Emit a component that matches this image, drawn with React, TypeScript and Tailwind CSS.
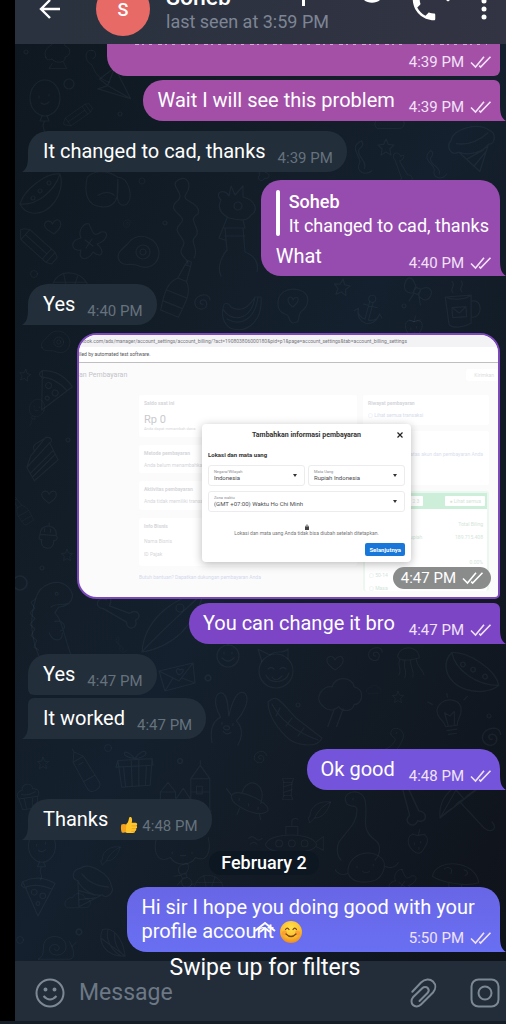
import React from "react";

type DoodleKind = keyof typeof doodles;

const doodles = {
  star: <path d="M0-8 2.4-2.6 8-2 3.8 2 5 8 0 5-5 8-3.8 2-8-2-2.4-2.6Z" />,
  heart: <path d="M0 7C-5 3-9 0-8-4-6-8-1-7 0-3 2-7 7-8 8-4 9 0 5 4 0 7Z" />,
  spiral: <path d="M1 1C-2 2-3-2 0-3 4-4 6 0 4 4 1 8-6 6-7 1-8-5-2-9 4-8 7-7 8-5 8-3" />,
  dot: <circle r="2" />,
  ring: <circle r="5" />,
  balloon: (
    <>
      <ellipse rx="15" ry="18" />
      <path d="M-3 18-5 23H4L2 18M0 23C-6 29 3 32-2 38M-6-2V0M4-4V-2M-4 5Q0 8 4 4" />
    </>
  ),
  plane: <path d="M-17-2-4-16 17 12-17 8-8 3-4-16 M-8 3 17 12M-17-2-8 3" />,
  hat: <path d="M-14 4C-18-4-10-10-6-12-4-20 8-18 10-10 18-8 18 2 10 4 12 12-4 12-6 6-10 8-14 8-14 4ZM-6 12-10 18H12L8 10" />,
  curl: <path d="M-10-22C-20-24-20-8-10-4-6 8 0 14 12 18M-10-22C-4-22-4-12-9-12" />,
  melon: (
    <>
      <path d="M-20 12C-16-2 6-20 20-18 26 0 10 24-8 21-14 20-18 16-20 12ZM-20 12C-4 14 14 0 20-18" />
      <circle cx="0" cy="-1" r="2" />
      <circle cx="9" cy="-9" r="2" />
      <circle cx="-7" cy="6" r="2" />
    </>
  ),
  bag: <path d="M-22-12C-26 6-22 20-6 21 8 22 14 14 12-10M-22-12C-14-20 0-20 12-12 24-12 30 10 22 18 12 22 10 14 12-8M-10 8C-4 4 4 4 8 8" />,
  wiggle: <path d="M-8-42C-18-36 2-28-10-20-20-10 4-6-6 2-16 12 4 16-4 26-8 34 2 36 2 42M-8-42C2-48 6-36 0-28-6-20 16-20 12-8 0-2 16 6 10 14 2 20 14 26 8 36" />,
  bottle: <path d="M-2-28H4L6-12C14-4 14 4 12 26H-8C-12 6-12-4-4-12ZM-4-12H6M-10 4H12M-9 16H12M-2-28-1-33H3L4-28" />,
  giraffe: (
    <>
      <path d="M-14-32C-22-40-10-44-6-36L-4-46 0-37 8-46 8-35C20-32 24-22 16-17 12-10 4-12-6-14-14-18-18-24-14-32ZM-8-14-12-4H10L8-12M-10-4-8 18M8-4 10 20M-10 4H10M-12-4-16 6-10 8M-8 18C-18 30-16 40-14 44M10 20C20 24 24 30 22 40" />
      <circle cx="3" cy="-26" r="4" />
    </>
  ),
  pencil: <path d="M-26-4-20-8 20-8 26-5V5L20 8-20 8-28 0ZM-20-8V8M14-8V8M20-8V8M-20 0H14" />,
  bird: <path d="M0-18C4-10 4-4 12-10 20-12 20-2 8 2 16 8 14 18 4 10 0 18-12 20-8 8-18 10-20-2-8-4-12-12-4-20 0-18ZM-4-2 4 4M3-3-3 6" />,
  egg: (
    <>
      <path d="M-20 8C-24 0-14-4-8-12 2-20 18-14 20 0 20 12 10 18 0 14-8 10-16 16-20 8Z" />
      <circle cx="4" cy="0" r="7" />
      <circle cx="4" cy="0" r="3" />
    </>
  ),
  turtle: <path d="M-20 8C-18-8-8-14 4-12 16-10 22 0 22 8ZM-20 8C-28 8-28 0-20 0M-12 8-14 14M14 8 16 14M-6-12-2 8M10-10 4 8M-16-2H20" />,
  banana: <path d="M-18-2C-10 12 10 10 14-14L20-14C22 8 8 22-8 18-16 16-20 6-18-2ZM-18-2C-18-10-12-8-10-4 0 2 8-4 14-14M-14 8C0 16 14 8 17-14" />,
  friedHeart: (
    <>
      <path d="M-15 2C-16-10-6-16 6-13 18-10 16 2 10 7 2 12 10 20 0 20-6 18-2 12-8 11-12 10-15 6-15 2Z" />
      <path d="M0 4C-6 0-6-5-3-6-1-6 0-4 0-3 2-7 6-6 5-3 5 0 2 2 0 4Z" />
    </>
  ),
  bow: <path d="M-2-3C-10-14-14-10-14-4-14 4-8 6-3 3ZM3-3C10-10 16-6 14 2 12 8 6 6 2 3ZM-3-3H3V3H-3ZM-2 3-4 12M3 3 8 12" />,
  anchor: (
    <>
      <circle cy="-14" r="4" />
      <path d="M-2-10V10C-10 9-12 4-12 0L-16 4M2-10V10C10 9 12 4 12 0L16 4M-12 2C-10 18 10 18 12 2M-8-6H8" />
    </>
  ),
  mug: <path d="M-14-12H12L10 16C2 20-8 20-12 16ZM12-6C24-8 22 12 11 10M-14-12C-8-8 6-8 12-12M-6-16C-10-20-2-22-6-27M3-16C-1-20 7-22 3-27M-8-1H6V9H-8ZM-8-1-1 5 6-1" />,
  bone: <path d="M-4-14C-10-22-18-12-10-8L4 12C0 20 12 22 12 14 20 14 18 4 10 6L-4-8C2-12 0-20-4-14Z" />,
  squiggle: <path d="M-6-16C-18-6 0 0-2 6-4 14 6 18 12 10M-6-16C-2-14-4-10-6-8-8 0 6 2 4 10" />,
  icecream: <path d="M-18-10C-14-20 10-20 18-10 24-6 20 4 14 2L0 24-14 2C-22 4-24-6-18-10ZM-14 2C-6 8 8 8 14 2M-8 10 8 6M-4 18 10 8M-14-6Q0 0 16-8" />,
  pizza: (
    <>
      <path d="M-16-14C-4-20 8-18 18-12L0 22ZM-16-14C-20-8-14-8-12-7M-14-8C-4-12 6-10 15-6" />
      <circle cx="-4" cy="-3" r="3" />
      <circle cx="5" cy="1" r="3" />
      <circle cx="0" cy="9" r="2" />
    </>
  ),
  cake: <path d="M-16 10 8-16 17 2-8 24ZM-16 10-12-2 4-22C10-22 12-18 8-16M-12 16 12-8M-10 20 14-4M-8-8C-12-14-4-16 2-20" />,
  acorn: <path d="M-8-2C-9-14 9-14 8-2ZM-8-2C-10 2-8 4-6 3-8 14 8 14 6 3 10 3 10-1 8-2M0-11V-14M-4-8V-5M2-8V-5" />,
  dino: (
    <>
      <path d="M-12 50C-22 28-22 6-16-12-12-28 8-34 18-24 28-14 20-4 8-3L4 3C12 10 14 30 22 50M0-3C6-8 12-4 18-7M4 12C14 10 18 20 10 22M-2 24C2 34 12 34 12 24" />
      <path d="M-16-12-21-8-17-2-22 3-17 9-22 15-17 20-21 27-15 32-18 39-13 42" />
      <circle cx="6" cy="-17" r="1.5" />
    </>
  ),
  leaf: (
    <>
      <path d="M-28 24C-26-6 0-30 34-36 26-8 8 18-28 24ZM-28 24C-14 8 0-4 34-36" />
      <circle cx="10" cy="-20" r="4" />
    </>
  ),
  envelope: <path d="M-18-6 16-14 18 6-12 14ZM-18-6 2 4 16-14M-12 14-4 1M18 6 5 1M2-2C-3-6 0-10 3-7 7-10 8-5 2-2Z" />,
  fox: (
    <>
      <circle r="17" />
      <path d="M-14-9-18-22-6-16C0-22 6-16 12-22L12-12M-8-2Q-5-5-2-2M4-2Q7-5 10-2M-4 6Q0 12 6 5M-10 4C-6 14 10 12 13 2" />
    </>
  ),
  fruit: (
    <>
      <circle r="11" />
      <path d="M-6 2Q0 8 6 2M0-11C0-18 8-18 10-12M-4-4V-2M4-4V-2" />
    </>
  ),
  jelly: <path d="M-12-2C-12-16 10-18 12-4-4 2-8 2-12-2ZM-9 0C-12 8-4 12-8 18M-3 0C-6 8 2 12-1 20M3-1C2 8 9 8 8 18M9-3C10 6 18 8 20 14" />,
  bunny: (
    <>
      <path d="M-14 30C-18 16-14 8-8 4-18-10-16-22-8-20-2-16-2-6 0 2 2-14 6-26 14-22 20-16 14-2 8 6 18 14 14 26 12 30" />
      <ellipse cx="-1" cy="14" rx="3" ry="2" />
      <path d="M-6 9V11M5 9V11M-4 18Q0 22 4 18" />
    </>
  ),
  boat: <path d="M-28-22C-20-30-18-26 0-6L26 14C22 24 4 22-6 16-20 4-28-10-28-22ZM-24-20C-16-4 0 8 22 16M-16-16-20-8M-4-6-10 2M8 4 2 12" />,
  tree: <path d="M-16 6C-26-2-16-14-8-12-6-22 10-22 12-12 22-10 20 4 12 4 10 12 0 10-2 6-6 10-12 10-16 6ZM-6 8-12 24M2 8-4 24" />,
  bulb: <path d="M-6 10C-6 4-14 0-12-8-8-20 12-18 12-6 12 2 6 4 6 10ZM-5 14H5M-4 18H4M-3 10-5-4 0 0 5-4 3 10M-16-14-20-17M0-19V-23M16-14 20-17" />,
  crayon: <path d="M-26 0-16-7 20-8C28-8 28 8 20 8L-16 7ZM-16-7V7M-26 0-30 0M10-8V8M-10-3V3" />,
  gift: <path d="M-18-10 18-12 16 16-14 18ZM-18-10-20-3 19-5 18-12M-4-11-3 17M4-11 4 17M0-12C-12-26-18-14 0-12 10-28 20-14 0-12M-12-3-10 17M12-4 11 16" />,
  castle: <path d="M-28 20V0L-20-10-12 0V20M-12 8 -4-4 4 8M4 20V-14L14-28 24-14V20M4-14H24M-28 0H-12M4 0H24M10-6H16V2H10ZM-24 8H-18M-30 20H26M14-28V-33" />,
  ufo: <path d="M-18 4C-20 14 14 24 20 14 22 6-14-6-18 4ZM-8 0C-6-18 16-14 12 8M-18 4-24-2M-8 14-10 22M12 18 14 24M-10 6V8M0 10V12M10 12V14" />,
  candy: <path d="M-5-8H5L4 8H-5ZM-5-8-7-13H7L5-8M-5 8-7 13H6L4 8M-5-3 5-6M-5 4 5 1" />,
  fish: <path d="M-14 8C-14-6 0-12 12-10 8 2 2 10-8 10L-14 16-16 10ZM-8 10C-4 2 0-4 12-10" />,
  cupcake: <path d="M-12 2H12L9 16H-9ZM-12 2C-16-6-8-8-6-8-8-16 8-18 7-8 14-8 16-2 12 2M-5 3-4 16M5 3 4 16M-8-3Q0 0 10-4" />,
  longneck: <path d="M-10-14C-18-26 4-32 8-18 12 0 2 10 18 22 26 28 22 38 18 42M-10-14C-6-10 0-14 0-8 0 6-10 12-18 24-22 34-18 40-16 42M-4-20V-18" />,
  umbrella: <path d="M-26 10C-28-14-6-32 18-24ZM-26 10C-18 2-16 2-12-1-8-6-8-6-2-9 4-16 10-18 18-24M-6-6 18 20C26 26 32 20 26 14M-26 10-10-18-2-9" />,
  submarine: (
    <>
      <path d="M-30 6C-28-10 28-10 30 6 26 18-26 18-30 6ZM-6-7V-16H8V-6M1-16V-22C1-26 8-26 8-24M30 2 38-4V12L30 8M-50-2Q-46-6-42-2T-34-2M-48 5Q-44 1-40 5" />
      <circle cx="-14" cy="4" r="4" />
      <circle cx="1" cy="4" r="4" />
      <circle cx="16" cy="4" r="4" />
    </>
  ),
  berry: <path d="M0-8C-12-14-14 0-6 8 0 14 4 12 8 4 14-6 8-12 0-8ZM-6-10 0-8 2-15M0-8 8-10M-4 0V2M3-2V0M1 5V7" />,
  dog: <path d="M-30-14C-34 6-24 12-14 6-8 16 8 16 14 6 26 12 32 0 28-16M-12 0V2M10 0V2M-3 4H3" />,
  shell: <path d="M-16-10C-6-16 8-8 16 12-4 18-18 6-16-10ZM-10-11C-10 0 0 10 12 13M-2-10C0 0 6 8 15 12M-14 0 16 12" />,
  snail: <path d="M-22 14C-12 8-18-2-14-8-6-20 16-14 12 2 8 12-8 10-8 2-8-6 4-6 4 0 4 4-2 4-2 1M-22 14H18C24 12 22 4 20-2M20-2 17-8M20-2 25-7" />,
  cloud: <path d="M-16 8C-24 2-14-8-8-6-4-16 10-12 10-5 20-6 20 8 12 8Z" />,
  mushroom: <path d="M-26 4C-24-18 20-20 26 4 14 10-14 10-26 4ZM-7 8C-4 18-8 24-6 28H8C10 20 6 14 8 8M-14-6C-10-10-4-8-6-2M8-8C12-8 14-4 10-2" />,
  whale: <path d="M-20 8C-22-12 4-22 18-8 24 0 18 12 10 16-4 20-16 18-20 8ZM-20 8C-28 12-34 6-34 4M20 0C28 4 34 0 36-4M-10 0V2M8-2V0M-4 6Q0 9 4 6" />,
};

const wallpaper: [DoodleKind, number, number, number, number][] = [
  ["hat", 57, 54, 0, 0.8], ["balloon", 45, 98, 0, 1], ["ring", 69, 84, 0, 1], ["curl", 100, 68, 0, 0.8],
  ["plane", 116, 84, 10, 1], ["pencil", 78, 115, -35, 0.6], ["dot", 120, 114, 0, 1], ["dot", 26, 52, 0, 1],
  ["melon", 40, 192, 0, 1], ["bag", 107, 188, 0, 0.9], ["ring", 142, 181, 0, 0.6], ["wiggle", 186, 222, 0, 1],
  ["bottle", 177, 290, 22, 0.95], ["giraffe", 235, 232, 0, 1], ["pencil", 38, 246, 42, 0.85], ["heart", 53, 227, -8, 1],
  ["bird", 89, 242, 0, 1], ["spiral", 127, 224, 0, 0.5], ["egg", 139, 252, 0, 1], ["dot", 165, 223, 0, 1],
  ["turtle", 69, 284, 0, 0.9], ["ring", 34, 274, 0, 0.7], ["spiral", 202, 303, 0, 1], ["banana", 241, 311, 0, 1],
  ["friedHeart", 293, 303, 0, 1], ["star", 342, 287, 8, 1], ["bow", 417, 291, 20, 1], ["anchor", 369, 311, 15, 0.9],
  ["mug", 460, 308, -4, 1], ["star", 386, 147, 0, 1], ["bone", 401, 168, 15, 0.8], ["squiggle", 436, 165, 0, 0.9],
  ["icecream", 473, 146, -15, 1.1], ["squiggle", 363, 158, 15, 1], ["cloud", 390, 122, 0, 0.8], ["bone", 260, 166, 20, 0.7],
  ["dot", 404, 306, 0, 1], ["berry", 414, 328, 0, 0.8], ["egg", 56, 342, 0, 0.7], ["star", 25, 375, 10, 0.7],
  ["pizza", 51, 390, 25, 1], ["balloon", 37, 408, 20, 0.5], ["cake", 42, 458, 0, 0.95], ["heart", 49, 497, 0, 0.9],
  ["dot", 68, 440, 0, 1], ["bottle", 22, 512, -30, 0.5], ["acorn", 48, 537, 5, 1], ["star", 67, 555, 0, 0.7],
  ["dot", 42, 568, 0, 1], ["ring", 20, 583, 0, 1.4], ["dino", 51, 610, 0, 0.95], ["bone", 117, 612, -25, 1.1],
  ["squiggle", 121, 645, 0, 0.5], ["leaf", 170, 628, 0, 1], ["envelope", 177, 677, 0, 1], ["fruit", 228, 656, 0, 1],
  ["dot", 208, 678, 0, 1.4], ["fox", 276, 671, 0, 1], ["heart", 335, 663, 0, 1], ["spiral", 375, 655, 0, 0.9],
  ["jelly", 408, 660, 8, 0.9], ["melon", 472, 670, 72, 1.15], ["bunny", 229, 714, 6, 1], ["boat", 296, 724, 0, 1],
  ["tree", 341, 700, 0, 1.1], ["bulb", 450, 716, -8, 1], ["star", 398, 697, 0, 0.7], ["cloud", 374, 690, 0, 0.4],
  ["dot", 489, 716, 0, 1], ["dot", 298, 705, 0, 1], ["spiral", 491, 738, 0, 1.2], ["longneck", 392, 746, 30, 0.7],
  ["crayon", 85, 771, 60, 0.85], ["gift", 135, 770, 0, 0.95], ["star", 43, 763, 0, 0.7], ["ring", 108, 748, 0, 0.7],
  ["spiral", 260, 758, 0, 0.8], ["dot", 180, 761, 0, 1.2], ["castle", 187, 792, 0, 0.95], ["ufo", 250, 794, 8, 1],
  ["candy", 288, 789, 0, 0.8], ["fish", 321, 810, 0, 0.8], ["cupcake", 28, 796, -8, 0.8], ["longneck", 357, 818, 0, 1],
  ["umbrella", 466, 808, 0, 1], ["bone", 410, 800, 20, 1.2], ["submarine", 291, 840, 0, 0.85], ["berry", 418, 843, 0, 0.9],
  ["dog", 183, 852, 0, 0.9], ["fish", 112, 854, 0, 0.7], ["balloon", 42, 846, 0, 0.9], ["pizza", 38, 895, 0, 0.95],
  ["icecream", 91, 886, 30, 1], ["cloud", 78, 902, 0, 0.7], ["dot", 79, 932, 0, 1.4], ["ring", 20, 940, 0, 0.7],
  ["shell", 114, 942, 15, 0.9], ["snail", 56, 948, 0, 0.8], ["whale", 366, 866, 0, 0.9], ["mushroom", 456, 876, 8, 0.9],
  ["bow", 184, 876, 70, 0.8], ["turtle", 208, 884, 0, 0.7], ["bird", 402, 884, 0, 0.8], ["spiral", 440, 772, 0, 0.6],
];

function Wallpaper() {
  return (
    <svg
      aria-hidden="true"
      className="absolute inset-0 h-full w-full"
      viewBox="15 44 491 917"
      preserveAspectRatio="xMinYMin slice"
      fill="none"
      stroke="#8fa6b8"
      strokeOpacity="0.08"
      strokeWidth="1.2"
      strokeLinecap="round"
      strokeLinejoin="round"
    >
      {wallpaper.map(([kind, x, y, angle, size], i) => (
        <g key={i} transform={`translate(${x} ${y}) rotate(${angle}) scale(${size})`}>
          {doodles[kind]}
        </g>
      ))}
    </svg>
  );
}

function Checks() {
  return (
    <svg aria-label="Read" role="img" width="22" height="14" viewBox="0 0 22 14" fill="none" stroke="currentColor" strokeWidth="1.6">
      <path d="M1 7.5 5.5 12 14 1.8M9.2 10.6 10.6 12 20.5 1.8" />
    </svg>
  );
}

function Time({ value, out }: { value: string; out?: boolean }) {
  return (
    <span
      className={
        out
          ? "-mb-1 ml-auto flex shrink-0 items-center gap-[6px] text-[15px] leading-[18px] text-[#f1e2f8]"
          : "-mb-1 shrink-0 text-[15px] leading-[18px] text-[#66727e]"
      }
    >
      {value}
      {out && <Checks />}
    </span>
  );
}

function Tail({ out }: { out?: boolean }) {
  return out ? (
    <svg aria-hidden="true" className="absolute bottom-0 left-full" width="6" height="16" viewBox="0 0 6 16" fill="currentColor">
      <path d="M-1 0H0C0 8 1 13 6 16H-1Z" />
    </svg>
  ) : (
    <svg aria-hidden="true" className="absolute right-full bottom-0" width="6" height="16" viewBox="0 0 6 16" fill="currentColor">
      <path d="M7 0H6C6 8 5 13 0 16H7Z" />
    </svg>
  );
}

function Incoming({ text, time, emoji, tail = true, shape = "rounded-[20px] rounded-bl-none" }: { text: string; time: string; emoji?: React.ReactNode; tail?: boolean; shape?: string }) {
  return (
    <div className={`relative flex items-end self-start bg-[#222e39] pt-2 pr-[14px] pb-[9px] pl-[15px] text-[#222e39] ${shape}`}>
      {tail && <Tail />}
      <p className="pr-3 text-white">{text}</p>
      {emoji}
      <Time value={time} />
    </div>
  );
}

function Outgoing({ children, time, shape, tail = true }: { children: React.ReactNode; time: string; shape: string; tail?: boolean }) {
  return (
    <div className={`relative flex items-end gap-[14px] self-end pt-2 pr-2 pb-[9px] pl-[14px] ${shape}`}>
      {tail && <Tail out />}
      <div className="text-white">{children}</div>
      <Time value={time} out />
    </div>
  );
}

function ThumbsUp() {
  return (
    <svg role="img" aria-label="Thumbs up" className="-mb-1 mr-1 shrink-0" width="18" height="20" viewBox="0 0 20 20">
      <path d="M7 9C10 7 9.500 3 10.500 1.500C12 0 14.500 2 13 7.500H17.500C19.500 8 19.500 10 18.300 10.700C19.500 11.700 19.200 13.500 17.800 14C18.500 15.300 18 16.500 16.700 16.800C16.800 18.300 16 19 14.500 19H9C7 19 6 18 5 17.500Z" fill="#ffc52b" />
      <path d="M1.500 9.500C3 8.500 5.500 8.500 7 9.500L6.500 17.500C5 19 3 19 1.800 18C0.800 15 0.800 12 1.500 9.500Z" fill="#f5a31c" />
      <path d="M13 11H18M13 14H17.500M12.500 17H16.500" stroke="#e6941c" strokeWidth="0.7" />
    </svg>
  );
}

function Smile() {
  return (
    <svg role="img" aria-label="Smiling face" className="ml-[6px] inline-block align-[-5px]" width="22" height="22" viewBox="0 0 22 22">
      <defs>
        <radialGradient id="face" cx="50%" cy="30%" r="70%">
          <stop offset="0" stopColor="#ffe14d" />
          <stop offset="0.6" stopColor="#fcc02f" />
          <stop offset="1" stopColor="#ee8a22" />
        </radialGradient>
      </defs>
      <circle cx="11" cy="11" r="11" fill="url(#face)" />
      <circle cx="4.500" cy="12" r="2.500" fill="#fa8a3a" opacity="0.6" />
      <circle cx="17.500" cy="12" r="2.500" fill="#fa8a3a" opacity="0.6" />
      <path d="M5.500 8.500Q7.300 5.700 9 8.500M13 8.500Q14.800 5.700 16.500 8.500M6 13Q11 18 16 13" fill="none" stroke="#7a4312" strokeWidth="1.2" strokeLinecap="round" />
    </svg>
  );
}

function Picker({ id, label, value }: { id: string; label: string; value: string }) {
  return (
    <div className="relative flex min-w-0 flex-1 flex-col justify-center rounded-[3px] border border-[#ececee] px-[5px] py-[3px]">
      <label htmlFor={id} className="text-[4px] leading-[5px] text-[#8a8d91]">{label}</label>
      <select id={id} className="w-full appearance-none text-[6px] leading-[8px] text-[#4b4d50]">
        <option>{value}</option>
      </select>
      <svg aria-hidden="true" className="absolute top-2 right-[7px]" width="4" height="3" viewBox="0 0 4 3">
        <path d="M0 0H4L2 3Z" fill="#333" />
      </svg>
    </div>
  );
}

function BillingDialog() {
  return (
    <div className="absolute top-[89px] right-[87px] left-[123px] flex h-[138px] flex-col rounded-[4px] bg-white px-[6px] pt-[7px] pb-[6px] shadow-[0_2px_10px_rgba(0,0,0,0.28)]">
      <div className="flex items-center">
        <h2 className="flex-1 pl-[8px] text-center text-[7px] leading-2 font-bold text-[#333]">Tambahkan informasi pembayaran</h2>
        <button aria-label="Tutup" className="mr-[2px]">
          <svg width="6" height="6" viewBox="0 0 6 6" stroke="#222" strokeWidth="1.2"><path d="m.5.5 5 5M5.500.5l-5 5" /></svg>
        </button>
      </div>
      <h3 className="mt-3 text-[6px] leading-2 font-bold text-[#333]">Lokasi dan mata uang</h3>
      <div className="mt-[6px] flex gap-[3px]">
        <Picker id="country" label="Negara/Wilayah" value="Indonesia" />
        <Picker id="currency" label="Mata Uang" value="Rupiah Indonesia" />
      </div>
      <div className="mt-[5px] flex">
        <Picker id="zone" label="Zona waktu" value="(GMT +07:00) Waktu Ho Chi Minh" />
      </div>
      <div className="mt-3 flex flex-col items-center">
        <svg aria-hidden="true" width="4" height="6" viewBox="0 0 4 6"><path d="M0 2.500H4V6H0Z" fill="#444" /><path d="M1 3V1.500Q2 0 3 1.500V3" fill="none" stroke="#444" strokeWidth=".7" /></svg>
        <p className="text-[5px] leading-[6px] whitespace-nowrap text-[#777]">Lokasi dan mata uang Anda tidak bisa diubah setelah ditetapkan.</p>
      </div>
      <button className="mt-auto self-end rounded-[2px] bg-[#1877d8] px-1 text-[6px] leading-[13px] font-bold text-white">Selanjutnya</button>
    </div>
  );
}

function Screenshot() {
  return (
    <figure className="relative w-[423px] self-end overflow-hidden rounded-[20px] rounded-br-[5px] border-2 border-[#7d48bd] bg-[#fbfbfc]">
      <div className="overflow-hidden bg-[#f3f3f5] text-[5px] leading-3 whitespace-nowrap text-[#77777c]">
        <span className="pl-[2px]">book.com/ads/manager/account_settings/account_billing/?act=190803806000180&amp;pid=p1&amp;page=account_settings&amp;tab=account_billing_settings</span>
      </div>
      <div className="border-b border-[#bfbfc2] bg-white text-[5px] leading-[15px] text-[#55565a]">lled by automated test software.</div>
      <div className="h-[234px] overflow-hidden">
        <div className="flex items-center justify-between pt-[6px]">
          <span className="text-[7px] leading-3 text-[#c3c4c8]">an Pembayaran</span>
          <span className="rounded-[3px] bg-white pr-1 pl-2 text-[5px] leading-3 text-[#dcdde0]">Kirimkan</span>
        </div>
        <div className="mt-[14px] grid grid-cols-[218px_126px] justify-end gap-[6px] pr-[9px] text-[5px] leading-[6px] text-[#d5d6da]">
          <div className="flex flex-col gap-2">
            <div className="h-[42px] rounded-[3px] bg-white px-[5px] pt-[5px]">
              <p className="font-bold">Saldo saat ini</p>
              <p className="mt-2 text-[11px] leading-3 text-[#c9cace]">Rp 0</p>
              <p className="text-[4px]">Anda dapat menambah dana</p>
            </div>
            <div className="h-[28px] rounded-[3px] bg-white px-[5px] pt-[5px]">
              <p className="font-bold">Metode pembayaran</p>
              <p className="mt-[6px]">Anda belum menambahkan</p>
            </div>
            <div className="h-[29px] rounded-[3px] bg-white px-[5px] pt-[5px]">
              <p className="font-bold">Aktivitas pembayaran</p>
              <p className="mt-[6px]">Anda tidak memiliki transaksi</p>
            </div>
            <div className="h-[48px] rounded-[3px] bg-white px-[5px] pt-[5px]">
              <p className="font-bold">Info Bisnis</p>
              <p className="mt-[9px]">Nama Bisnis</p>
              <p className="mt-[7px]">ID Pajak</p>
            </div>
            <p className="text-[#d3d9ec]">Butuh bantuan? Dapatkan dukungan pembayaran Anda</p>
          </div>
          <div className="flex flex-col gap-[6px]">
            <div className="h-[30px] rounded-[3px] bg-white px-[5px] pt-[5px]">
              <p className="font-bold">Riwayat pembayaran</p>
              <p className="mt-[6px] text-[#d5dcec]">▢ Lihat semua transaksi</p>
            </div>
            <div className="flex h-[54px] flex-col items-end gap-[6px] rounded-[3px] bg-white px-[6px] pt-[20px] text-[#d9e0ee]">
              <p>Atur batas akun dan pembayaran Anda</p>
            </div>
            <div className="rounded-[3px] border-2 border-b-0 border-[#eaf8ef] bg-white text-[#d3e6da]">
              <div className="flex h-[16px] items-center justify-end gap-[22px] bg-[#cdeed8] pr-[2px]">
                <span className="rounded-[1px] bg-white px-1 leading-[10px]">1 2 3</span>
                <span className="rounded-[1px] bg-white px-1 leading-[10px]">● Lihat semua</span>
              </div>
              <div className="flex flex-col gap-[7px] px-1 pt-3">
                <p className="self-end">Total Biling</p>
                <p className="flex justify-between"><span className="pl-[38px]">Rupiah</span><span>189.715.408</span></p>
                <p className="mt-3 self-end">0.00%</p>
                <p>▢ 50-14</p>
                <p>▢ Masa</p>
              </div>
            </div>
          </div>
        </div>
      </div>
      <BillingDialog />
      <figcaption className="absolute right-[7px] bottom-2 flex items-center gap-[6px] rounded-full bg-[#8a8c8c] py-[2px] pr-[7px] pl-2 text-[15px] leading-[18px] text-white">
        4:47 PM
        <Checks />
      </figcaption>
    </figure>
  );
}

function Header() {
  return (
    <header className="relative flex h-11 items-end overflow-hidden bg-linear-to-r from-[#29323e] to-[#323343] text-white">
      <svg aria-hidden="true" className="absolute top-0 right-[54px]" width="152" height="6" viewBox="0 0 152 6" fill="currentColor">
        <path d="M2 0H5V6H2Z" />
        <path d="M64 0H80C76 3.500 68 3.500 64 0Z" />
        <path d="M146 0H150L148 1.500Z" />
      </svg>
      <div className="flex h-[70px] flex-1 shrink-0 items-center pl-6">
        <button aria-label="Back">
          <svg width="22" height="22" viewBox="0 0 22 22" fill="none" stroke="currentColor" strokeWidth="2.400"><path d="M21 11H2M11 2 2 11l9 9" /></svg>
        </button>
        <div className="ml-[35px] flex h-[54px] w-[54px] items-center justify-center rounded-full bg-[#e86a66] text-[18px] font-medium">S</div>
        <div className="ml-4 flex flex-1 flex-col pt-[2px]">
          <h1 className="text-[23px] leading-6 font-medium">Soheb</h1>
          <p className="text-[18px] leading-6 text-[#7d8595]">last seen at 3:59 PM</p>
        </div>
        <button aria-label="Call" className="mr-[42px]">
          <svg width="30" height="30" viewBox="0 0 24 24" fill="currentColor"><path d="M6.600 10.800c1.400 2.800 3.800 5.100 6.600 6.600l2.200-2.200c.3-.3.700-.4 1-.2 1.100.4 2.300.6 3.600.6.600 0 1 .4 1 1V20c0 .6-.4 1-1 1C10.600 21 3 13.400 3 4c0-.6.4-1 1-1h3.500c.6 0 1 .4 1 1 0 1.300.2 2.500.6 3.600.1.300 0 .7-.2 1z" /></svg>
        </button>
        <button aria-label="More" className="mr-[19px]">
          <svg width="6" height="22" viewBox="0 0 6 22" fill="currentColor"><circle cx="3" cy="3" r="2.500" /><circle cx="3" cy="11" r="2.500" /><circle cx="3" cy="19" r="2.500" /></svg>
        </button>
      </div>
    </header>
  );
}

export default function App() {
  return (
    <div className="flex min-h-screen flex-col bg-[#17202a] font-['Roboto',sans-serif]">
      <div className="flex flex-1 bg-black pl-[15px]">
        <div className="flex min-w-0 flex-1 flex-col">
          <Header />
          <main className="relative flex-1 overflow-hidden bg-linear-to-br from-[#0f1820] via-[#14202d] to-[#0f131a]">
            <Wallpaper />
            <div className="relative flex flex-col pr-[6px] pl-[13px] text-[20px] leading-6">
              <div className="relative flex h-8 w-[393px] items-end justify-end self-end rounded-b-[20px] rounded-br-[6px] bg-[#a550a7] pr-2 pb-[9px]">
                <svg aria-hidden="true" className="absolute inset-x-7 top-0 w-[352px]" height="2" viewBox="0 0 352 2"><path d="M0 .5H150M158 .5H270M282 .5H352" stroke="#d9a9da" strokeDasharray="4 3 2 5 3 6" /></svg>
                <Time value="4:39 PM" out />
              </div>
              <div className="mt-1 flex flex-col">
                <Outgoing time="4:39 PM" shape="rounded-[20px] rounded-tr-[6px] rounded-br-none bg-[#a34fa8] text-[#a34fa8]">Wait I will see this problem</Outgoing>
              </div>
              <div className="mt-[10px] flex flex-col">
                <Incoming text="It changed to cad, thanks" time="4:39 PM" />
              </div>
              <div className="relative mt-2 flex flex-col self-end rounded-[20px] rounded-br-none bg-[#964cae] pt-[10px] pr-2 pb-2 pl-[15px] text-[#964cae]">
                <Tail out />
                <blockquote className="flex gap-[9px] pr-[3px] text-[18px] text-white">
                  <span className="w-1 shrink-0 rounded-full bg-white" />
                  <div className="leading-6">
                    <p className="font-medium">Soheb</p>
                    <p className="-mb-[2px]">It changed to cad, thanks</p>
                  </div>
                </blockquote>
                <div className="mt-2 flex items-end">
                  <p className="text-white">What</p>
                  <Time value="4:40 PM" out />
                </div>
              </div>
              <div className="mt-2 flex flex-col">
                <Incoming text="Yes" time="4:40 PM" />
              </div>
              <div className="mt-2 flex flex-col">
                <Screenshot />
              </div>
              <div className="mt-1 flex flex-col">
                <Outgoing time="4:47 PM" shape="rounded-[20px] rounded-tr-[6px] rounded-br-none bg-[#7b45c6] text-[#7b45c6]">You can change it bro</Outgoing>
              </div>
              <div className="mt-[10px] flex flex-col gap-[3px]">
                <Incoming text="Yes" time="4:47 PM" tail={false} shape="rounded-[20px] rounded-bl-[6px]" />
                <Incoming text="It worked" time="4:47 PM" shape="rounded-[20px] rounded-tl-[6px] rounded-bl-none" />
              </div>
              <div className="mt-[10px] flex flex-col">
                <Outgoing time="4:48 PM" shape="rounded-[20px] rounded-br-none bg-[#7354da] text-[#7354da]">Ok good</Outgoing>
              </div>
              <div className="mt-[9px] flex flex-col">
                <Incoming text="Thanks" time="4:48 PM" emoji={<ThumbsUp />} />
              </div>
              <time className="mt-[11px] mb-3 self-center rounded-full bg-[#0d1722] px-3 text-[18px] font-medium text-white">February 2</time>
              <div className="flex flex-col">
                <Outgoing time="5:50 PM" shape="rounded-[20px] rounded-br-none bg-linear-to-b from-[#6866e6] to-[#696ff2] text-[#696ff2]">
                  <p className="-mr-[80px]">
                    Hi sir I hope you doing good with your
                    <br />
                    profile account
                    <Smile />
                  </p>
                </Outgoing>
              </div>
            </div>
          </main>
          <footer className="relative flex h-[60px] items-center bg-[#222d39] pt-1 pr-[6px] pl-5 text-[#7d8895]">
            <div className="pointer-events-none absolute inset-x-0 -top-10 flex flex-col items-center pl-[9px] text-[23px] leading-7 text-white">
              <svg aria-hidden="true" width="22" height="12" viewBox="0 0 22 12" fill="none" stroke="currentColor" strokeWidth="2"><path d="M1 10 11 2l10 8M6 11l5-4 5 4" /></svg>
              <p className="mt-[21px]">Swipe up for filters</p>
            </div>
            <button aria-label="Emoji">
              <svg width="30" height="30" viewBox="0 0 30 30" fill="none" stroke="currentColor" strokeWidth="2"><circle cx="15" cy="15" r="13.500" /><path d="M8.500 18Q15 25 21.500 18" /><circle cx="10.500" cy="11.500" r="1" fill="currentColor" /><circle cx="19.500" cy="11.500" r="1" fill="currentColor" /></svg>
            </button>
            <input aria-label="Message" placeholder="Message" className="ml-[14px] min-w-0 flex-1 bg-transparent text-[23px] outline-none placeholder:text-[#6d7885]" />
            <button aria-label="Attach" className="mr-8">
              <svg width="28" height="30" viewBox="0 0 28 30" fill="none" stroke="currentColor" strokeWidth="2" strokeLinecap="round"><path d="M2.300 13.700 11 4.500C15 .8 20 .8 23 3.500 26 6.500 26 11 23 14.500L11 26.500C8.500 29 5 29 3 27 1 25 1 21.500 3 19.300L12.500 10C14 8.500 16.500 8.700 17.700 10 19 11.500 19 13.500 17.500 15L9.500 23" /></svg>
            </button>
            <button aria-label="Camera">
              <svg width="30" height="30" viewBox="0 0 30 30" fill="none" stroke="currentColor" strokeWidth="2"><rect x="1.500" y="1.500" width="27" height="27" rx="7" /><circle cx="15" cy="15" r="6.500" /></svg>
            </button>
          </footer>
        </div>
      </div>
      <div className="h-[3px] bg-[#151d26]" />
    </div>
  );
}
